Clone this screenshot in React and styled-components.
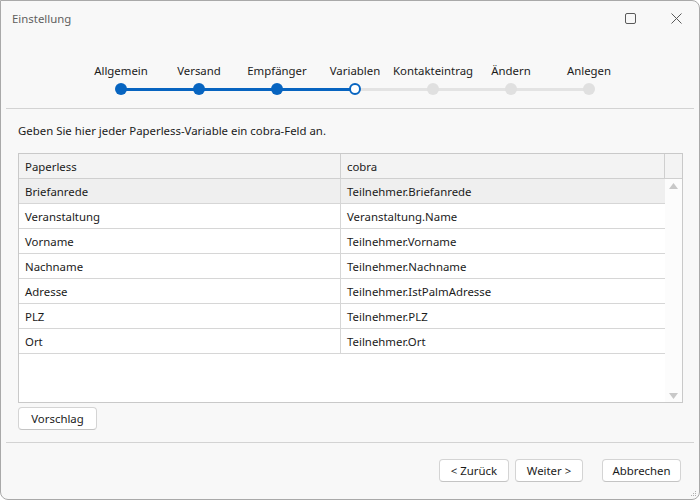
import React from "react";
import styled, { createGlobalStyle } from "styled-components";

const steps = ["Allgemein", "Versand", "Empfänger", "Variablen", "Kontakteintrag", "Ändern", "Anlegen"];
const current = 3;

const rows = [
  ["Briefanrede", "Teilnehmer.Briefanrede"],
  ["Veranstaltung", "Veranstaltung.Name"],
  ["Vorname", "Teilnehmer.Vorname"],
  ["Nachname", "Teilnehmer.Nachname"],
  ["Adresse", "Teilnehmer.IstPalmAdresse"],
  ["PLZ", "Teilnehmer.PLZ"],
  ["Ort", "Teilnehmer.Ort"],
];

const BLUE = "#0764c0";
const GREY_LINE = "#e3e3e3";

export default function App() {
  return (
    <>
      <Global />
      <Styled.Window>
        <Styled.TitleBar>
          <Styled.Title>Einstellung</Styled.Title>
          <Styled.WinButtons>
            <Styled.WinButton>
              <svg width="11" height="11" viewBox="0 0 11 11">
                <rect x="0.5" y="0.5" width="10" height="10" rx="1.5" fill="none" stroke="#5a5a5a" />
              </svg>
            </Styled.WinButton>
            <Styled.WinButton>
              <svg width="11" height="11" viewBox="0 0 11 11">
                <path d="M0.5 0.5 L10.5 10.5 M10.5 0.5 L0.5 10.5" stroke="#5a5a5a" strokeWidth="1" />
              </svg>
            </Styled.WinButton>
          </Styled.WinButtons>
        </Styled.TitleBar>

        <Styled.Stepper>
          {steps.map((s, i) => (
            <Styled.Step key={s}>
              <Styled.StepLabel>{s}</Styled.StepLabel>
              <Styled.Track
                $first={i === 0}
                $last={i === steps.length - 1}
                $leftDone={i <= current}
                $rightDone={i < current}
              >
                <Styled.Dot $state={i < current ? "done" : i === current ? "active" : "todo"} />
              </Styled.Track>
            </Styled.Step>
          ))}
        </Styled.Stepper>

        <Styled.Divider />

        <Styled.Content>
          <Styled.Intro>Geben Sie hier jeder Paperless-Variable ein cobra-Feld an.</Styled.Intro>
          <Styled.Table>
            <Styled.HeaderRow>
              <Styled.HeadCell>Paperless</Styled.HeadCell>
              <Styled.HeadCell>cobra</Styled.HeadCell>
              <Styled.HeadCell $corner />
            </Styled.HeaderRow>
            <Styled.Body>
              <Styled.Rows>
                {rows.map(([a, b], i) => (
                  <Styled.Row key={a} $selected={i === 0}>
                    <Styled.Cell>{a}</Styled.Cell>
                    <Styled.Cell>{b}</Styled.Cell>
                  </Styled.Row>
                ))}
              </Styled.Rows>
              <Styled.ScrollBar>
                <svg width="9" height="6" viewBox="0 0 9 6">
                  <path d="M4.5 0 L9 6 L0 6 Z" fill="#c8c8c8" />
                </svg>
                <svg width="9" height="6" viewBox="0 0 9 6">
                  <path d="M0 0 L9 0 L4.5 6 Z" fill="#c8c8c8" />
                </svg>
              </Styled.ScrollBar>
            </Styled.Body>
          </Styled.Table>
          <Styled.Button $width={79}>Vorschlag</Styled.Button>
        </Styled.Content>

        <Styled.Divider $top={12} />

        <Styled.Footer>
          <Styled.Button $width={70}>&lt; Zurück</Styled.Button>
          <Styled.Button $width={68}>Weiter &gt;</Styled.Button>
          <Styled.Button $width={79} $gapLeft={13}>Abbrechen</Styled.Button>
        </Styled.Footer>

        <Styled.Grip>
          <svg width="6" height="6" viewBox="0 0 6 6">
            <rect x="4" y="0" width="1" height="1" fill="#b0b0b0" />
            <rect x="2" y="2" width="1" height="1" fill="#b0b0b0" />
            <rect x="4" y="2" width="1" height="1" fill="#b0b0b0" />
            <rect x="0" y="4" width="1" height="1" fill="#b0b0b0" />
            <rect x="2" y="4" width="1" height="1" fill="#b0b0b0" />
            <rect x="4" y="4" width="1" height="1" fill="#b0b0b0" />
          </svg>
        </Styled.Grip>
      </Styled.Window>
    </>
  );
}

const Global = createGlobalStyle`
  html, body {
    margin: 0;
    padding: 0;
    background: #ffffff;
  }
  * {
    box-sizing: border-box;
  }
  body {
    font-family: "Segoe UI", "Noto Sans", "Liberation Sans", sans-serif;
    font-size: 11.4px;
    color: #1b1b1b;
  }
`;

const Styled = {
  Window: styled.div`
    position: relative;
    width: 700px;
    height: 500px;
    display: flex;
    flex-direction: column;
    background: #f8f8f8;
    border: 1px solid #a9a9a9;
    border-radius: 0 8px 8px 8px;
    overflow: hidden;
  `,
  TitleBar: styled.div`
    height: 35px;
    display: flex;
    align-items: center;
    justify-content: space-between;
    padding-left: 11px;
  `,
  Title: styled.div`
    color: #5f5f5f;
  `,
  WinButtons: styled.div`
    display: flex;
    align-items: center;
    height: 100%;
  `,
  WinButton: styled.div`
    width: 46px;
    height: 100%;
    display: flex;
    align-items: center;
    justify-content: center;
  `,
  Stepper: styled.div`
    height: 72px;
    padding-top: 27px;
    padding-left: 81px;
    display: grid;
    grid-template-columns: repeat(7, 78px);
    align-content: start;
  `,
  Step: styled.div`
    display: flex;
    flex-direction: column;
    align-items: center;
    gap: 4px;
  `,
  StepLabel: styled.div`
    line-height: 16px;
    white-space: nowrap;
    color: #1b1b1b;
  `,
  Track: styled.div`
    position: relative;
    width: 100%;
    height: 12px;
    display: flex;
    justify-content: center;
    align-items: center;
    &::before,
    &::after {
      content: "";
      position: absolute;
      top: 5px;
      height: 3px;
      width: 50%;
    }
    &::before {
      left: 0;
      background: ${(p) => (p.$first ? "transparent" : p.$leftDone ? BLUE : GREY_LINE)};
    }
    &::after {
      right: 0;
      background: ${(p) => (p.$last ? "transparent" : p.$rightDone ? BLUE : GREY_LINE)};
    }
  `,
  Dot: styled.div`
    position: relative;
    z-index: 1;
    width: 12px;
    height: 12px;
    border-radius: 50%;
    background: ${(p) => (p.$state === "done" ? BLUE : p.$state === "active" ? "#ffffff" : "#e0e0e0")};
    border: ${(p) => (p.$state === "active" ? `2px solid ${BLUE}` : "none")};
  `,
  Divider: styled.div`
    height: 1px;
    margin: ${(p) => p.$top || 0}px 5px 0 5px;
    background: #d3d3d3;
    flex-shrink: 0;
  `,
  Content: styled.div`
    padding: 14px 17px 0 17px;
    display: flex;
    flex-direction: column;
    align-items: flex-start;
  `,
  Intro: styled.div`
    line-height: 16px;
    margin-bottom: 14px;
  `,
  Table: styled.div`
    width: 665px;
    height: 250px;
    border: 1px solid #c9c9c9;
    background: #ffffff;
    display: flex;
    flex-direction: column;
    margin-bottom: 4px;
  `,
  HeaderRow: styled.div`
    display: grid;
    grid-template-columns: 322px 324px 1fr;
    height: 25px;
    background: #f3f3f3;
    border-bottom: 1px solid #cfcfcf;
  `,
  HeadCell: styled.div`
    display: flex;
    align-items: center;
    padding-left: 6px;
    border-right: ${(p) => (p.$corner ? "none" : "1px solid #cfcfcf")};
  `,
  Body: styled.div`
    flex: 1;
    display: flex;
  `,
  Rows: styled.div`
    width: 646px;
  `,
  Row: styled.div`
    display: grid;
    grid-template-columns: 322px 324px;
    height: 25px;
    border-bottom: 1px solid #d6d6d6;
    background: ${(p) => (p.$selected ? "#efefef" : "#ffffff")};
  `,
  Cell: styled.div`
    display: flex;
    align-items: center;
    padding-left: 6px;
    &:first-child {
      border-right: 1px solid #d6d6d6;
    }
  `,
  ScrollBar: styled.div`
    flex: 1;
    background: #fcfcfc;
    display: flex;
    flex-direction: column;
    justify-content: space-between;
    align-items: center;
    padding: 4px 0 3px 0;
  `,
  Button: styled.button`
    width: ${(p) => p.$width}px;
    height: 23px;
    margin-left: ${(p) => p.$gapLeft || 0}px;
    padding: 0;
    font-family: inherit;
    font-size: inherit;
    color: #1b1b1b;
    background: #ffffff;
    border: 1px solid #d4d4d4;
    border-bottom-color: #c4c4c4;
    border-radius: 4px;
  `,
  Footer: styled.div`
    display: flex;
    justify-content: flex-end;
    gap: 6px;
    padding: 16px 18px 0 0;
  `,
  Grip: styled.div`
    position: absolute;
    right: 2px;
    bottom: 2px;
    line-height: 0;
  `,
};
